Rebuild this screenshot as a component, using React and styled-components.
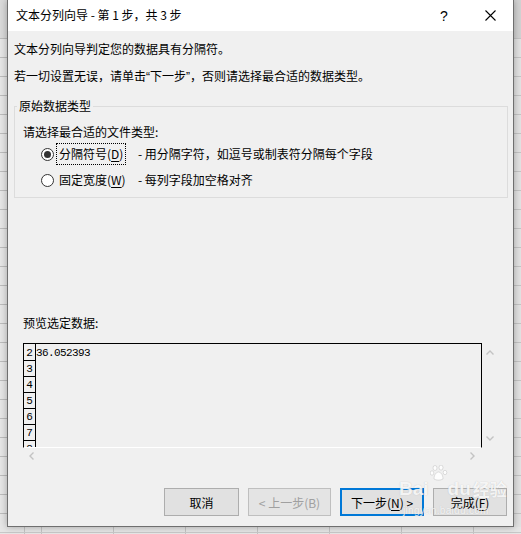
import React from 'react';
import styled, { createGlobalStyle } from 'styled-components';

const GlobalStyle = createGlobalStyle`
  html, body {
    margin: 0;
    padding: 0;
  }
  body {
    background: #ffffff;
    font-family: "Noto Sans CJK SC", "Liberation Sans", sans-serif;
    font-size: 12px;
    color: #000;
  }
`;

const ChevronUp = () => (
  <svg width="8" height="5" viewBox="0 0 8 5">
    <path d="M0.5 4.5 L4 1 L7.5 4.5" fill="none" stroke="#c3c3c3" strokeWidth="1.4" />
  </svg>
);

const ChevronDown = () => (
  <svg width="8" height="5" viewBox="0 0 8 5">
    <path d="M0.5 0.5 L4 4 L7.5 0.5" fill="none" stroke="#c3c3c3" strokeWidth="1.4" />
  </svg>
);

const ChevronLeft = () => (
  <svg width="5" height="8" viewBox="0 0 5 8">
    <path d="M4.5 0.5 L1 4 L4.5 7.5" fill="none" stroke="#c3c3c3" strokeWidth="1.4" />
  </svg>
);

const ChevronRight = () => (
  <svg width="5" height="8" viewBox="0 0 5 8">
    <path d="M0.5 0.5 L4 4 L0.5 7.5" fill="none" stroke="#c3c3c3" strokeWidth="1.4" />
  </svg>
);

const CloseIcon = () => (
  <svg width="11" height="11" viewBox="0 0 11 11">
    <path d="M0.5 0.5 L10.5 10.5 M10.5 0.5 L0.5 10.5" stroke="#000" strokeWidth="1.1" />
  </svg>
);

const Paw = () => (
  <svg width="18" height="16" viewBox="0 0 18 16">
    <g fill="rgba(255,255,255,0.85)" stroke="rgba(150,150,150,0.35)" strokeWidth="0.8">
      <ellipse cx="5" cy="3" rx="2" ry="2.5" />
      <ellipse cx="11" cy="2.6" rx="2" ry="2.5" />
      <ellipse cx="2" cy="8" rx="1.8" ry="2.2" />
      <ellipse cx="15" cy="7.5" rx="1.8" ry="2.2" />
      <path d="M4 14 C4 9 7 7 8.5 7 C10 7 13 9 13 14 C11 15.5 6 15.5 4 14 Z" />
    </g>
  </svg>
);

const rows = [
  { n: 2, text: '36.052393' },
  { n: 3, text: '' },
  { n: 4, text: '' },
  { n: 5, text: '' },
  { n: 6, text: '' },
  { n: 7, text: '' },
  { n: 8, text: '' },
];

const App = () => {
  return (
    <>
      <GlobalStyle />
      <Page>
        <SheetLeft />
        <Dialog>
          <TitleBar>
            <Title>文本分列向导 - 第 1 步，共 3 步</Title>
            <TitleButton>?</TitleButton>
            <TitleButton>
              <CloseIcon />
            </TitleButton>
          </TitleBar>
          <Body>
            <Intro>文本分列向导判定您的数据具有分隔符。</Intro>
            <Intro gap={11}>
              若一切设置无误，请单击<Quote>“</Quote>下一步<Quote>”</Quote>，否则请选择最合适的数据类型。
            </Intro>

            <GroupBox>
              <Legend>原始数据类型</Legend>
              <Prompt>请选择最合适的文件类型:</Prompt>
              <OptionList>
                <Radio checked />
                <OptionLabel focused>
                  分隔符号(<u>D</u>)
                </OptionLabel>
                <Desc>- 用分隔字符，如逗号或制表符分隔每个字段</Desc>

                <Radio />
                <OptionLabel>
                  固定宽度(<u>W</u>)
                </OptionLabel>
                <Desc>- 每列字段加空格对齐</Desc>
              </OptionList>
            </GroupBox>

            <PreviewLabel>预览选定数据:</PreviewLabel>
            <Preview>
              <PreviewTable>
                {rows.map((row) => (
                  <PreviewRow key={row.n}>
                    <RowNum>{row.n}</RowNum>
                    <RowCell>{row.text}</RowCell>
                  </PreviewRow>
                ))}
              </PreviewTable>
              <VScroll>
                <ChevronUp />
                <ChevronDown />
              </VScroll>
              <HScroll>
                <ChevronLeft />
                <ChevronRight />
              </HScroll>
              <div />
            </Preview>

            <ButtonRow>
              <Button width={75}>取消</Button>
              <Button width={83} disabled>
                &lt; 上一步(B)
              </Button>
              <Button width={84} primary>
                下一步(<u>N</u>) &gt;
              </Button>
              <Button width={74}>
                完成(<u>F</u>)
              </Button>
            </ButtonRow>
          </Body>
        </Dialog>
        <SheetRight />
        <SheetBottom />

        <Watermark>
          <WatermarkLogo>
            Bai
            <Paw />
            du
            <WatermarkCn>经验</WatermarkCn>
          </WatermarkLogo>
          <WatermarkUrl>jingyan.baidu.com</WatermarkUrl>
        </Watermark>
      </Page>
    </>
  );
};

export default App;

const Page = styled.div`
  position: relative;
  width: 521px;
  height: 534px;
  overflow: hidden;
  display: grid;
  grid-template-columns: 7px 507px 7px;
  grid-template-rows: 527px 7px;
  background: #fff;
`;

const SheetLeft = styled.div`
  background:
    linear-gradient(#dadada, #dadada) top / 100% 38px no-repeat,
    repeating-linear-gradient(to bottom, #bcbcbc 0 1px, #e6e6e6 1px 19px);
`;

const SheetRight = styled.div`
  background:
    linear-gradient(#d2d2d2, #d2d2d2) top / 100% 38px no-repeat,
    repeating-linear-gradient(to bottom, #c4c4c4 0 1px, #e2e2e2 1px 19px);
`;

const SheetBottom = styled.div`
  grid-column: 1 / 4;
  background:
    linear-gradient(#c8c8c8, #c8c8c8) 0 5px / 100% 1px no-repeat,
    repeating-linear-gradient(to right, #c4c4c4 0 1px, #e6e6e6 1px 72px) 41px 0 / auto;
`;

const Dialog = styled.div`
  position: relative;
  z-index: 1;
  box-sizing: border-box;
  display: flex;
  flex-direction: column;
  background: #f0f0f0;
  border: 1px solid #6f6f6f;
  border-top: none;
  box-shadow: 0 0 7px rgba(0, 0, 0, 0.3);
`;

const TitleBar = styled.div`
  height: 31px;
  flex-shrink: 0;
  display: flex;
  align-items: center;
  background: #fff;
  padding-left: 8px;
`;

const Title = styled.div`
  flex: 1;
  line-height: 16px;
  padding-bottom: 1px;
`;

const TitleButton = styled.div`
  width: 46px;
  height: 31px;
  display: flex;
  align-items: center;
  justify-content: center;
  font-family: "Liberation Sans", sans-serif;
  font-size: 14px;
`;

const Body = styled.div`
  flex: 1;
  display: flex;
  flex-direction: column;
  padding: 0 5px 10px 6px;
`;

const Intro = styled.div`
  margin-top: ${(p) => p.gap || 10}px;
  line-height: 16px;
`;

const Quote = styled.span`
  font-family: "Liberation Sans", sans-serif;
`;

const GroupBox = styled.div`
  position: relative;
  box-sizing: border-box;
  height: 92px;
  margin-top: 21px;
  padding: 17px 0 0 8px;
  border: 1px solid #dcdcdc;
`;

const Legend = styled.div`
  position: absolute;
  top: -9px;
  left: 2px;
  padding: 0 2px;
  line-height: 16px;
  background: #f0f0f0;
`;

const Prompt = styled.div`
  line-height: 16px;
`;

const OptionList = styled.div`
  display: grid;
  grid-template-columns: 13px 80px auto;
  grid-auto-rows: 22px;
  column-gap: 2px;
  row-gap: 4px;
  align-items: center;
  margin: 3px 0 0 18px;
`;

const Radio = styled.span`
  position: relative;
  box-sizing: border-box;
  width: 13px;
  height: 13px;
  border: 1px solid #333;
  border-radius: 50%;
  background: #fff;

  &::after {
    content: '';
    display: ${(p) => (p.checked ? 'block' : 'none')};
    position: absolute;
    top: 2px;
    left: 2px;
    width: 7px;
    height: 7px;
    border-radius: 50%;
    background: #333;
  }
`;

const OptionLabel = styled.span`
  justify-self: start;
  padding: 1px 2px;
  line-height: 18px;
  border: 1px dotted ${(p) => (p.focused ? '#000' : 'transparent')};

  u {
    text-underline-offset: 2px;
  }
`;

const Desc = styled.span`
  line-height: 16px;
`;

const PreviewLabel = styled.div`
  margin: 117px 0 0 9px;
  line-height: 16px;
`;

const Preview = styled.div`
  display: grid;
  grid-template-columns: 459px 16px;
  grid-template-rows: 105px 16px;
  margin: 12px 0 0 9px;
`;

const PreviewTable = styled.div`
  box-sizing: border-box;
  overflow: hidden;
  border: 1px solid #000;
  border-bottom-color: #fff;
  font-family: "Liberation Mono", monospace;
  font-size: 11px;
`;

const PreviewRow = styled.div`
  display: flex;
  height: 16px;

  &:first-child {
    height: 17px;
  }
`;

const RowNum = styled.div`
  box-sizing: border-box;
  width: 12px;
  display: flex;
  align-items: flex-end;
  justify-content: center;
  line-height: 13px;
  border-right: 1px solid #000;
  border-bottom: 1px solid #000;
`;

const RowCell = styled.div`
  padding: 3px 0 0 0;
  line-height: 12px;
  letter-spacing: -0.6px;
`;

const VScroll = styled.div`
  display: flex;
  flex-direction: column;
  justify-content: space-between;
  align-items: center;
  padding: 7px 0;
`;

const HScroll = styled.div`
  display: flex;
  justify-content: space-between;
  align-items: center;
  padding: 0 7px 0 6px;
`;

const ButtonRow = styled.div`
  margin-top: auto;
  display: flex;
  justify-content: flex-end;
  gap: 9px;
  margin-right: 1px;
`;

const Button = styled.button`
  box-sizing: border-box;
  width: ${(p) => p.width}px;
  height: 28px;
  padding: 0;
  font-family: "Noto Sans CJK SC", "Liberation Sans", sans-serif;
  font-size: 12px;
  color: ${(p) => (p.disabled ? '#a0a0a0' : '#000')};
  background: ${(p) => (p.disabled ? '#e4e4e4' : '#e1e1e1')};
  border: ${(p) => (p.primary ? '2px solid #0078d7' : p.disabled ? '1px solid #bfbfbf' : '1px solid #adadad')};

  u {
    text-underline-offset: 2px;
  }
`;

const Watermark = styled.div`
  position: absolute;
  z-index: 2;
  left: 399px;
  top: 465px;
  display: flex;
  flex-direction: column;
  align-items: flex-start;
  pointer-events: none;
`;

const WatermarkLogo = styled.div`
  display: flex;
  align-items: flex-end;
  font-family: "Liberation Sans", sans-serif;
  font-weight: bold;
  font-size: 19px;
  line-height: 20px;
  color: rgba(255, 255, 255, 0.85);
  text-shadow: 0 0 1px rgba(120, 120, 120, 0.4);

  svg {
    margin: 0 0 18px 1px;
  }
`;

const WatermarkCn = styled.span`
  margin-left: 2px;
  font-family: "Noto Sans CJK SC", sans-serif;
  font-size: 17px;
`;

const WatermarkUrl = styled.div`
  margin: 7px 0 0 4px;
  font-family: "Liberation Sans", sans-serif;
  font-size: 10px;
  line-height: 10px;
  letter-spacing: 0.3px;
  color: rgba(255, 255, 255, 0.8);
  text-shadow: 0 0 1px rgba(120, 120, 120, 0.35);
`;
